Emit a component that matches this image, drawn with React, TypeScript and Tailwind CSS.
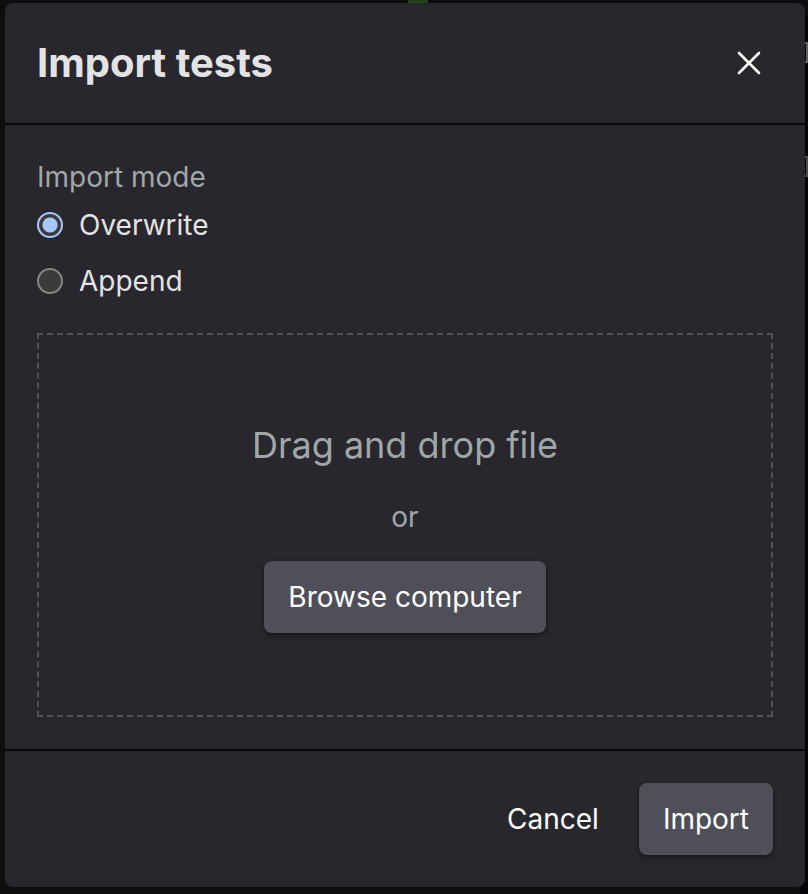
import { useState } from 'react';

const primaryButton =
  'h-[72px] rounded-lg bg-[#4f4f59] px-6 text-[28px] leading-10 text-white shadow-[0_2px_4px_rgba(0,0,0,0.5)]';

function CloseIcon() {
  return (
    <svg width="24" height="24" viewBox="0 0 24 24" fill="none" aria-hidden="true">
      <path d="M2 2L22 22M22 2L2 22" stroke="#ffffff" strokeWidth="2.6" strokeLinecap="round" />
    </svg>
  );
}

function ModeOption({
  label,
  checked,
  onSelect,
}: {
  label: string;
  checked: boolean;
  onSelect: () => void;
}) {
  return (
    <label className="flex h-10 items-center gap-4 text-[28px] leading-10 text-[#e3e3e5]">
      <input
        type="radio"
        name="import-mode"
        checked={checked}
        onChange={onSelect}
        className="size-[26px] shrink-0 appearance-none rounded-full border-2 border-[#858585] bg-[#3b3b3b] checked:border-[#a5c8ff] checked:bg-[radial-gradient(circle,#a5c8ff_7px,#3b3b3b_8px)] checked:bg-origin-border"
      />
      {label}
    </label>
  );
}

export default function App() {
  const [mode, setMode] = useState('overwrite');

  return (
    <div className="relative min-h-screen bg-[#0e0e0f] pt-[3px] pr-[3px] pb-[7px] pl-[5px] font-['Inter','Liberation_Sans',sans-serif]">
      <div className="absolute top-0 left-1/2 ml-1 h-2 w-5 bg-[#23421c]" />
      <div className="absolute top-4 right-0 bottom-0 w-2 bg-[#050506]" />
      <div className="absolute top-[42px] right-0 h-[21px] w-[3px] border-y-2 border-r-2 border-[#606063]" />
      <div className="absolute top-[156px] right-0 h-[21px] w-[3px] border-y-2 border-r-2 border-[#4b4b4d]" />

      <div
        role="dialog"
        aria-labelledby="dialog-title"
        className="relative rounded-lg bg-[#28272d]"
      >
        <header className="flex h-[122px] items-center justify-between border-b-2 border-[#09090b] px-8">
          <h1 id="dialog-title" className="text-[40px] leading-[48px] font-bold text-[#e3e3e5]">
            Import tests
          </h1>
          <button type="button" aria-label="Close" className="flex size-12 items-center justify-center">
            <CloseIcon />
          </button>
        </header>

        <main className="p-8">
          <fieldset>
            <legend className="text-[28px] leading-10 text-[#a1a7a9]">Import mode</legend>
            <div className="mt-2 flex flex-col gap-4">
              <ModeOption
                label="Overwrite"
                checked={mode === 'overwrite'}
                onSelect={() => setMode('overwrite')}
              />
              <ModeOption
                label="Append"
                checked={mode === 'append'}
                onSelect={() => setMode('append')}
              />
            </div>
          </fieldset>

          <section className="mt-8 flex h-96 flex-col items-center justify-center border-2 border-dashed border-[#525254] pt-1 text-[#a1a7a9]">
            <p className="text-[36px] leading-[48px]">Drag and drop file</p>
            <p className="mt-7 mb-6 text-[28px] leading-10">or</p>
            <button type="button" className={primaryButton}>
              Browse computer
            </button>
          </section>
        </main>

        <footer className="flex justify-end gap-4 border-t-2 border-[#09090b] p-8">
          <button type="button" className="h-[72px] px-6 text-[28px] leading-10 text-white">
            Cancel
          </button>
          <button type="button" className={primaryButton}>
            Import
          </button>
        </footer>
      </div>
    </div>
  );
}
